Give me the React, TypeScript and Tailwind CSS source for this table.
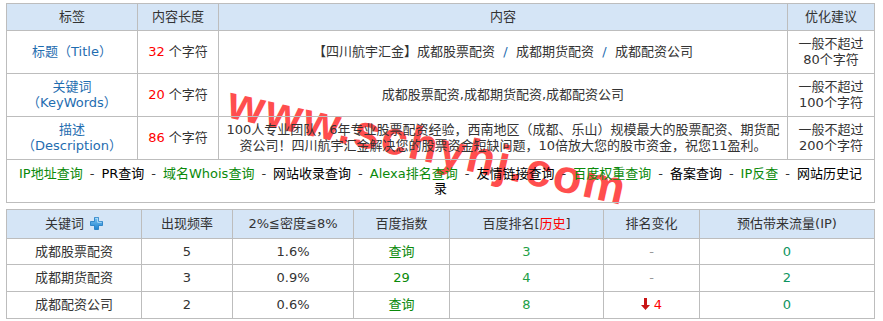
import React from "react";

const F = { fontFamily: '"DejaVu Sans", "Noto Sans CJK SC", sans-serif' };

const td = "border border-[#bdbdbd] text-center align-middle p-0";
const th = "border border-[#bdbdbd] text-center align-middle p-0 font-normal bg-[#d5e5f6] text-[#333]";

function Sep() {
  return <span className="mx-[7px] text-[#333]">-</span>;
}

function PlusIcon() {
  return (
    <svg width="13" height="13" viewBox="0 0 13 13" className="inline-block align-[-2px] ml-[6px]">
      <defs>
        <linearGradient id="pg" x1="0" y1="0" x2="0" y2="1">
          <stop offset="0" stopColor="#7cc4f2" />
          <stop offset="1" stopColor="#1c82d0" />
        </linearGradient>
      </defs>
      <path d="M4.5 0.5h4v4h4v4h-4v4h-4v-4h-4v-4h4z" fill="url(#pg)" stroke="#1a78c2" strokeWidth="0.8" />
      <path d="M5.3 1.3h2.4v4h4" fill="none" stroke="#c8e8ff" strokeWidth="0.8" />
    </svg>
  );
}

function DownArrow() {
  return (
    <svg width="9" height="12" viewBox="0 0 9 12" className="inline-block align-[-1px] mr-[4px]">
      <path d="M3 0h3v7h3l-4.5 5L0 7h3z" fill="#c81414" />
    </svg>
  );
}

export default function App() {
  const green = "text-[#0a8a0a]";
  const green2 = "text-[#22a046]";
  const slash = <span className="text-[#1f6db0]">{"\u00a0/\u00a0"}</span>;
  return (
    <div className="relative bg-white w-[883px] h-[321px] pl-[6px] pt-[3px] text-[13px] leading-[16px] text-[#333]" style={F}>
      <div
        className="absolute z-0 left-[234px] top-[78px] pointer-events-none whitespace-nowrap text-[47px] leading-none font-bold text-[#ff3b3b] opacity-90 tracking-[2px] origin-top-left rotate-[12.5deg]"
        style={{ fontFamily: '"Liberation Sans", Arial, sans-serif' }}
      >
        www.schyhj.com
      </div>

      <table className="relative z-[1] table-fixed border-collapse w-[868px]">
        <colgroup>
          <col className="w-[131px]" />
          <col className="w-[81px]" />
          <col className="w-[569px]" />
          <col className="w-[87px]" />
        </colgroup>
        <thead>
          <tr className="h-[27px]">
            <th className={th}>标签</th>
            <th className={th}>内容长度</th>
            <th className={th}>内容</th>
            <th className={th}>优化建议</th>
          </tr>
        </thead>
        <tbody>
          <tr className="h-[43px]">
            <td className={td + " text-[#1f6db0]"}>标题（Title）</td>
            <td className={td}>
              <span className="text-[#f00]">32</span> 个字符
            </td>
            <td className={td}>
              【四川航宇汇金】成都股票配资 {slash} 成都期货配资 {slash} 成都配资公司
            </td>
            <td className={td}>
              一般不超过
              <br />
              80个字符
            </td>
          </tr>
          <tr className="h-[43px]">
            <td className={td + " text-[#1f6db0]"}>
              关键词
              <br />
              （KeyWords）
            </td>
            <td className={td}>
              <span className="text-[#f00]">20</span> 个字符
            </td>
            <td className={td}>成都股票配资,成都期货配资,成都配资公司</td>
            <td className={td}>
              一般不超过
              <br />
              100个字符
            </td>
          </tr>
          <tr className="h-[43px]">
            <td className={td + " text-[#1f6db0]"}>
              描述
              <br />
              （Description）
            </td>
            <td className={td}>
              <span className="text-[#f00]">86</span> 个字符
            </td>
            <td className={td}>
              100人专业团队，6年专业股票配资经验，西南地区（成都、乐山）规模最大的股票配资、期货配
              <br />
              资公司！四川航宇汇金解决您的股票资金短缺问题，10倍放大您的股市资金，祝您11盈利。
            </td>
            <td className={td}>
              一般不超过
              <br />
              200个字符
            </td>
          </tr>
          <tr className="h-[43px]">
            <td colSpan={4} className={td + " text-black leading-[15px] pb-[1px]"}>
              <span className={green}>IP地址查询</span>
              <Sep />
              <span>PR查询</span>
              <Sep />
              <span className={green}>域名Whois查询</span>
              <Sep />
              <span>网站收录查询</span>
              <Sep />
              <span className={green}>Alexa排名查询</span>
              <Sep />
              <span>友情链接查询</span>
              <Sep />
              <span className={green}>百度权重查询</span>
              <Sep />
              <span>备案查询</span>
              <Sep />
              <span className={green}>IP反查</span>
              <Sep />
              <span>网站历史记</span>
              <br />
              <span>录</span>
            </td>
          </tr>
        </tbody>
      </table>

      <table className="relative z-[1] table-fixed border-collapse w-[868px] mt-[6px]">
        <colgroup>
          <col className="w-[135px]" />
          <col className="w-[91px]" />
          <col className="w-[121px]" />
          <col className="w-[96px]" />
          <col className="w-[154px]" />
          <col className="w-[96px]" />
          <col className="w-[175px]" />
        </colgroup>
        <thead>
          <tr className="h-[29px]">
            <th className={th}>
              关键词
              <PlusIcon />
            </th>
            <th className={th}>出现频率</th>
            <th className={th}>2%≦密度≦8%</th>
            <th className={th}>百度指数</th>
            <th className={th}>
              百度排名[<span className="text-[#f00]">历史</span>]
            </th>
            <th className={th}>排名变化</th>
            <th className={th}>预估带来流量(IP)</th>
          </tr>
        </thead>
        <tbody>
          <tr className="h-[26px]">
            <td className={td}>成都股票配资</td>
            <td className={td}>5</td>
            <td className={td}>1.6%</td>
            <td className={td + " " + green}>查询</td>
            <td className={td + " " + green2}>3</td>
            <td className={td + " text-[#999]"}>-</td>
            <td className={td + " text-[#0e9460]"}>0</td>
          </tr>
          <tr className="h-[27px]">
            <td className={td}>成都期货配资</td>
            <td className={td}>3</td>
            <td className={td}>0.9%</td>
            <td className={td + " " + green}>29</td>
            <td className={td + " " + green2}>4</td>
            <td className={td + " text-[#999]"}>-</td>
            <td className={td + " text-[#0e9460]"}>2</td>
          </tr>
          <tr className="h-[27px]">
            <td className={td}>成都配资公司</td>
            <td className={td}>2</td>
            <td className={td}>0.6%</td>
            <td className={td + " " + green}>查询</td>
            <td className={td + " " + green2}>8</td>
            <td className={td + " text-[#f00]"}>
              <DownArrow />4
            </td>
            <td className={td + " text-[#0e9460]"}>0</td>
          </tr>
        </tbody>
      </table>
    </div>
  );
}
